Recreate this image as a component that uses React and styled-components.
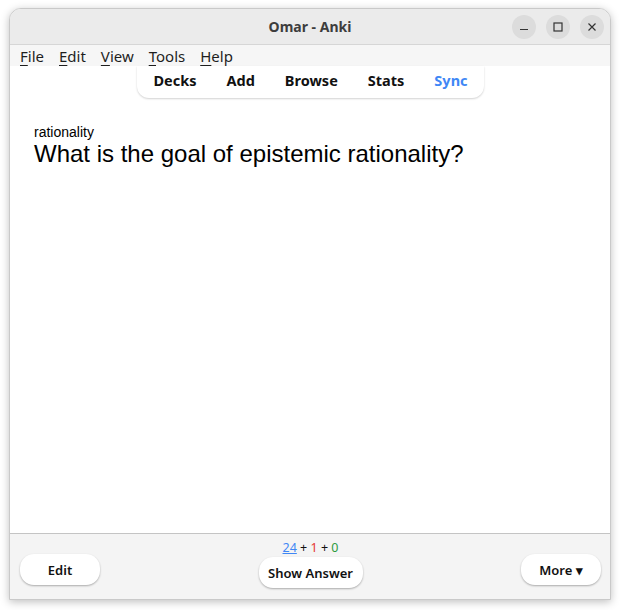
import styled, { createGlobalStyle } from "styled-components";

const GlobalStyle = createGlobalStyle`
  html, body {
    margin: 0;
    padding: 0;
    background: #ffffff;
  }
  body {
    font-family: "Noto Sans", "Open Sans", sans-serif;
  }
`;

const Page = styled.div`
  width: 621px;
  height: 610px;
  padding: 8px 10px 10px 9px;
  box-sizing: border-box;
`;

const Window = styled.div`
  width: 602px;
  height: 592px;
  display: flex;
  flex-direction: column;
  border-radius: 12px 12px 0 0;
  overflow: hidden;
  border: 1px solid #c9c9c9;
  box-sizing: border-box;
  box-shadow: 0 2px 8px rgba(0, 0, 0, 0.25);
  background: #ffffff;
`;

const TitleBar = styled.div`
  height: 35px;
  flex: none;
  display: flex;
  align-items: center;
  justify-content: center;
  position: relative;
  background: #ebebeb;
  border-bottom: 1px solid #d6d6d6;
`;

const Title = styled.div`
  font-size: 14px;
  font-weight: 700;
  color: #3d3d3d;
`;

const WinControls = styled.div`
  position: absolute;
  right: 6px;
  top: 6px;
  display: flex;
  gap: 10px;
`;

const WinButton = styled.div`
  width: 24px;
  height: 24px;
  border-radius: 50%;
  background: #dcdcdc;
  display: flex;
  align-items: center;
  justify-content: center;
`;

const MenuBar = styled.div`
  height: 21px;
  flex: none;
  display: flex;
  align-items: center;
  gap: 15px;
  padding-left: 10px;
  background: #f6f6f6;
  font-size: 15px;
  color: #1e1e1e;
`;

const MenuItem = styled.span`
  u {
    text-decoration-thickness: 1px;
    text-underline-offset: 3px;
  }
`;

const Content = styled.div`
  flex: 1;
  display: flex;
  flex-direction: column;
  background: #ffffff;
`;

const ToolbarWrap = styled.div`
  display: flex;
  justify-content: center;
`;

const Toolbar = styled.div`
  display: flex;
  gap: 30px;
  padding: 4px 16px 8px 16px;
  background: #ffffff;
  border-radius: 0 0 12px 12px;
  box-shadow: 0 1px 2px rgba(0, 0, 0, 0.18);
  margin-left: 1px;
`;

const ToolLink = styled.span`
  font-size: 14.5px;
  font-weight: 700;
  color: ${(p) => (p.$active ? "#3f87f5" : "#111111")};
`;

const Card = styled.div`
  padding: 26px 0 0 24px;
  font-family: "Liberation Sans", Arial, sans-serif;
  color: #000000;
`;

const Deck = styled.div`
  font-size: 14px;
  line-height: 16px;
`;

const Question = styled.div`
  font-size: 24px;
  line-height: 28px;
`;

const BottomBar = styled.div`
  height: 65px;
  flex: none;
  background: #f4f4f4;
  border-top: 1px solid #c4c4c4;
  display: grid;
  grid-template-columns: 1fr auto 1fr;
  padding: 0 9px 0 10px;
`;

const Side = styled.div`
  display: flex;
  align-items: flex-start;
  padding-top: 20px;
  justify-content: ${(p) => (p.$right ? "flex-end" : "flex-start")};
`;

const Center = styled.div`
  display: flex;
  flex-direction: column;
  align-items: center;
  padding-top: 6px;
`;

const Counts = styled.div`
  font-size: 12.5px;
  line-height: 16px;
  color: #111;
  margin-bottom: 1px;
`;

const Count = styled.span`
  color: ${(p) => p.$color};
  text-decoration: ${(p) => (p.$underline ? "underline" : "none")};
`;

const Button = styled.div`
  width: ${(p) => p.$w}px;
  height: 31px;
  box-sizing: border-box;
  border-radius: 14px;
  background: #ffffff;
  box-shadow: 0 1px 2px rgba(0, 0, 0, 0.3);
  display: flex;
  align-items: center;
  justify-content: center;
  font-size: 13px;
  font-weight: 600;
  color: #111;
`;

const App = () => {
  return (
    <>
      <GlobalStyle />
      <Page>
        <Window>
          <TitleBar>
            <Title>Omar - Anki</Title>
            <WinControls>
              <WinButton>
                <svg width="10" height="10" viewBox="0 0 10 10">
                  <path d="M1 7.5h8" stroke="#333" strokeWidth="1.2" />
                </svg>
              </WinButton>
              <WinButton>
                <svg width="10" height="10" viewBox="0 0 10 10">
                  <rect x="1" y="1" width="8" height="8" fill="none" stroke="#333" strokeWidth="1.2" />
                </svg>
              </WinButton>
              <WinButton>
                <svg width="10" height="10" viewBox="0 0 10 10">
                  <path d="M1.5 1.5l7 7M8.5 1.5l-7 7" stroke="#333" strokeWidth="1.2" />
                </svg>
              </WinButton>
            </WinControls>
          </TitleBar>
          <MenuBar>
            <MenuItem><u>F</u>ile</MenuItem>
            <MenuItem><u>E</u>dit</MenuItem>
            <MenuItem><u>V</u>iew</MenuItem>
            <MenuItem><u>T</u>ools</MenuItem>
            <MenuItem><u>H</u>elp</MenuItem>
          </MenuBar>
          <Content>
            <ToolbarWrap>
              <Toolbar>
                <ToolLink>Decks</ToolLink>
                <ToolLink>Add</ToolLink>
                <ToolLink>Browse</ToolLink>
                <ToolLink>Stats</ToolLink>
                <ToolLink $active>Sync</ToolLink>
              </Toolbar>
            </ToolbarWrap>
            <Card>
              <Deck>rationality</Deck>
              <Question>What is the goal of epistemic rationality?</Question>
            </Card>
          </Content>
          <BottomBar>
            <Side>
              <Button $w={80}>Edit</Button>
            </Side>
            <Center>
              <Counts>
                <Count $color="#3f87f5" $underline>24</Count> +{" "}
                <Count $color="#e53935">1</Count> +{" "}
                <Count $color="#2e9b3e">0</Count>
              </Counts>
              <Button $w={104}>Show Answer</Button>
            </Center>
            <Side $right>
              <Button $w={80}>More ▾</Button>
            </Side>
          </BottomBar>
        </Window>
      </Page>
    </>
  );
};

export default App;
